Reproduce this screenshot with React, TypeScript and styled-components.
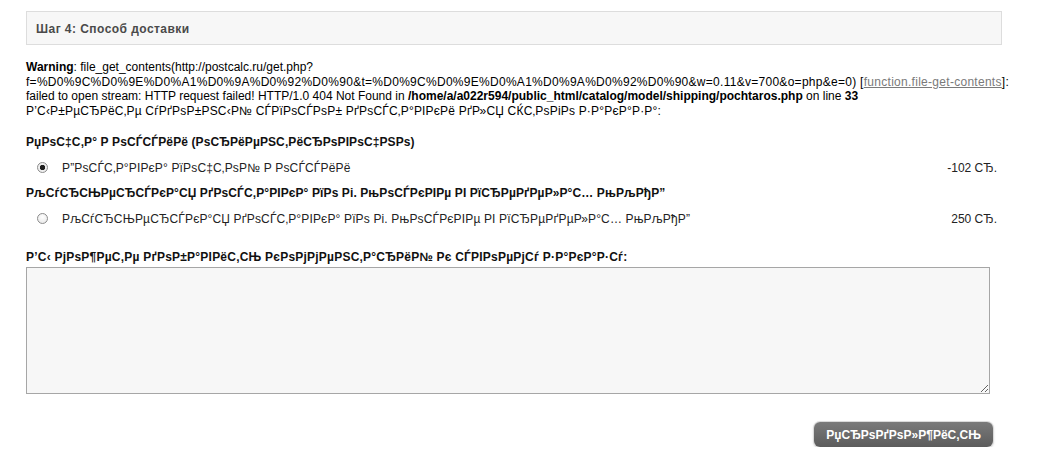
import styled, { createGlobalStyle } from "styled-components";

const GlobalStyle = createGlobalStyle`
  html, body {
    margin: 0;
    padding: 0;
    background: #ffffff;
  }
  body {
    font-family: "Liberation Sans", Arial, sans-serif;
    font-size: 12px;
    color: #000000;
  }
`;

const Page = styled.div`
  width: 995px;
  padding: 11px 0 0 26px;
`;

const StepHead = styled.div`
  box-sizing: border-box;
  width: 976px;
  height: 34px;
  padding: 10px 9px 0;
  border: 1px solid #dddddd;
  background: #f7f7f7;
  color: #4a4a4a;
  font-weight: bold;
  line-height: 14px;
  letter-spacing: 0.45px;
`;

const Warning = styled.div`
  width: 990px;
  margin-top: 15px;
  line-height: 14.5px;
  color: #000000;

  a {
    color: #7a7a7a;
    text-decoration: underline;
  }
`;

// the long url line and the intro sentence run a bit wider in the original
const Spaced = styled.span<{ $ls: number }>`
  letter-spacing: ${({ $ls }) => $ls}px;
`;

const Methods = styled.div`
  margin-top: 11.5px;
  width: 971px;
`;

const MethodTitle = styled.div`
  height: 25px;
  line-height: 25px;
  font-weight: bold;
  letter-spacing: 0.1px;
  color: #111111;
`;

const Option = styled.label`
  display: grid;
  grid-template-columns: 36px 1fr auto;
  align-items: center;
  height: 26px;
  color: #222222;
`;

const OptionText = styled.span`
  letter-spacing: 0.15px;
`;

const Radio = styled.input.attrs({ type: "radio" })`
  appearance: none;
  box-sizing: border-box;
  margin: 0 0 0 11px;
  width: 11px;
  height: 11px;
  border-radius: 50%;
  border: 1px solid #8c8c8c;
  background: radial-gradient(circle at 50% 35%, #ffffff 0, #e4e4e4 100%);

  &:checked {
    background: radial-gradient(circle, #1e1e1e 0 2.4px, #eeeeee 3px);
  }
`;

const Price = styled.span`
  text-align: right;
`;

const CommentLabel = styled.div`
  margin-top: 18px;
  line-height: 14.5px;
  font-weight: bold;
  letter-spacing: 0.22px;
  color: #111111;
`;

const Comment = styled.textarea`
  display: block;
  box-sizing: border-box;
  margin: 3px 0 0;
  width: 964px;
  height: 127px;
  border: 1px solid #a6a6a6;
  background: #f7f7f7;
  font-family: inherit;
  font-size: 12px;
`;

const Buttons = styled.div`
  display: flex;
  justify-content: flex-end;
  width: 967px;
  margin-top: 28px;
`;

const Button = styled.button`
  height: 25px;
  padding: 0 12px;
  border: none;
  border-radius: 6px;
  background: linear-gradient(#7a7a7a, #5c5c5c);
  box-shadow: 0 0 0 1px #dadada, 0 1px 3px rgba(0, 0, 0, 0.25);
  color: #ffffff;
  font-family: inherit;
  font-size: 12px;
  font-weight: bold;
`;

const T = {
  intro: "Р’С‹Р±РµСЂРёС‚Рµ СѓРґРѕР±РЅС‹Р№ СЃРїРѕСЃРѕР± РґРѕСЃС‚Р°РІРєРё РґР»СЏ СЌС‚РѕРіРѕ Р·Р°РєР°Р·Р°:",
  post: "РџРѕС‡С‚Р° Р\u00a0РѕСЃСЃРёРё (РѕСЂРёРµРЅС‚РёСЂРѕРІРѕС‡РЅРѕ)",
  postOption: "Р”РѕСЃС‚Р°РІРєР° РїРѕС‡С‚РѕР№ Р\u00a0РѕСЃСЃРёРё",
  courier: "РљСѓСЂСЊРµСЂСЃРєР°СЏ РґРѕСЃС‚Р°РІРєР° РїРѕ Рі. РњРѕСЃРєРІРµ РІ РїСЂРµРґРµР»Р°С… РњРљРђР”",
  rub: "СЂ.",
  comment: "Р’С‹ РјРѕР¶РµС‚Рµ РґРѕР±Р°РІРёС‚СЊ РєРѕРјРјРµРЅС‚Р°СЂРёР№ Рє СЃРІРѕРµРјСѓ Р·Р°РєР°Р·Сѓ:",
  next: "РџСЂРѕРґРѕР»Р¶РёС‚СЊ",
};

const METHODS = [
  { id: "pochtaros", title: T.post, label: T.postOption, price: "-102", checked: true },
  { id: "courier", title: T.courier, label: T.courier, price: "250", checked: false },
];

export default function App() {
  return (
    <Page>
      <GlobalStyle />
      <StepHead>Шаг 4: Способ доставки</StepHead>
      <Warning>
        <b>Warning</b>: file_get_contents(http://postcalc.ru/get.php?
        <br />
        <Spaced $ls={0.28}>
          f=%D0%9C%D0%9E%D0%A1%D0%9A%D0%92%D0%90&amp;t=%D0%9C%D0%9E%D0%A1%D0%9A%D0%92%D0%90&amp;w=0.11&amp;v=700&amp;o=php&amp;e=0)
          [<a href="#function.file-get-contents">function.file-get-contents</a>]:
        </Spaced>{" "}
        failed to open stream: HTTP request failed! HTTP/1.0 404 Not Found in{" "}
        <b>/home/a/a022r594/public_html/catalog/model/shipping/pochtaros.php</b> on line <b>33</b>
        <br />
        <Spaced $ls={0.19}>{T.intro}</Spaced>
      </Warning>
      <Methods>
        {METHODS.map((m) => (
          <div key={m.id}>
            <MethodTitle>{m.title}</MethodTitle>
            <Option>
              <Radio name="shipping_method" defaultChecked={m.checked} />
              <OptionText>{m.label}</OptionText>
              <Price>{`${m.price} ${T.rub}`}</Price>
            </Option>
          </div>
        ))}
      </Methods>
      <CommentLabel>{T.comment}</CommentLabel>
      <Comment name="comment" />
      <Buttons>
        <Button type="button">{T.next}</Button>
      </Buttons>
    </Page>
  );
}
